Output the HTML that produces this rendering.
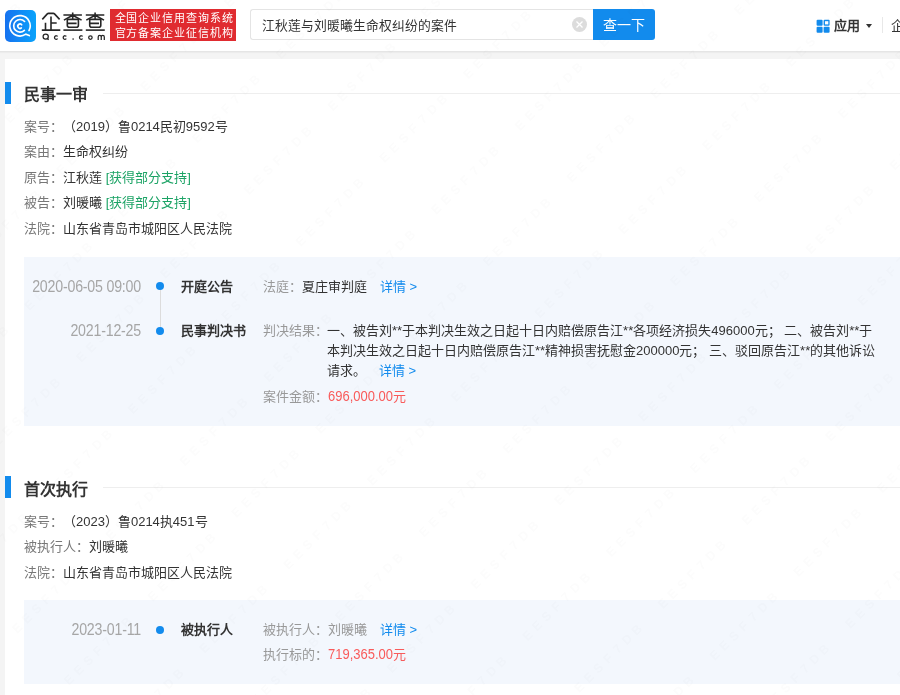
<!DOCTYPE html>
<html lang="zh-CN"><head><meta charset="utf-8">
<style>
*{box-sizing:border-box;margin:0;padding:0}
html,body{width:900px;height:695px;overflow:hidden}
body{text-spacing-trim:space-all;background:#f4f4f4;font-family:"Liberation Sans",sans-serif;font-size:13px;color:#333;position:relative}
.abs{position:absolute}
#hdr{left:0;top:0;width:900px;height:51px;background:#fff;box-shadow:0 1px 0 #e5e5e5,0 2px 1px #ececec}
#logo{left:5px;top:10px;width:31px;height:32px;border-radius:5px;background:linear-gradient(90deg,#1672f0,#0aa3fb)}
#brand{left:41px;top:9px;font-size:22px;letter-spacing:1px;color:#222;line-height:24px}
#qcc{left:42px;top:32px;font-size:9px;letter-spacing:3.2px;color:#222;line-height:10px;font-weight:bold}
#red{left:110px;top:9px;width:126px;height:32px;background:#e02b30;color:#fff;font-size:11px;line-height:15px;padding:1.5px 0 0 4.5px;letter-spacing:0.95px;white-space:nowrap}
#search{left:250px;top:9px;width:344px;height:31px;border:1px solid #e4e4e4;border-right:none;border-radius:3px 0 0 3px;background:#fff}
#stext{left:262px;top:10px;line-height:31px;font-size:12.8px;color:#333}
#clr{left:572px;top:17px;width:15px;height:15px;border-radius:50%;background:#dcdcdc}
#btn{left:593px;top:9px;width:62px;height:31px;background:#128bed;border-radius:0 3px 3px 0;color:#fff;font-size:14px;line-height:33px;text-align:center}
#apps{left:817px;top:20px;width:13px;height:13px}
#appt{left:834px;top:16px;font-size:13px;font-weight:bold;color:#333;line-height:20px}
#tri{left:866px;top:24px;width:0;height:0;border-left:3.5px solid transparent;border-right:3.5px solid transparent;border-top:4px solid #333}
#div{left:882px;top:17px;width:1px;height:16px;background:#e8e8e8}
#qi{left:891px;top:16px;font-size:13px;color:#333;line-height:20px}
#card{left:5px;top:59px;width:895px;height:636px;background:#fff}
.bar{left:5px;width:6px;height:22px;background:#128bed}
.h{left:24px;font-size:16px;font-weight:bold;color:#333;line-height:22px}
.hl{left:103px;height:1px;width:797px;background:#eee}
.row{left:24px;line-height:20px;color:#333;white-space:nowrap}
.lb{color:#999}
.row .lb{color:#777}
.grn{color:#1ba365}
.tl{left:24px;width:876px;background:#f3f7fd}
.dt{width:120px;text-align:right;color:#a6a6a6;font-size:14.2px;letter-spacing:-0.2px;line-height:20px;white-space:nowrap;transform:scaleY(1.14);transform-origin:50% 70%}
.dot{width:8px;height:8px;border-radius:50%;background:#128bed}
.vl{left:159.5px;width:1px;background:#dcdcdc}
.tt{left:181px;font-weight:bold;color:#333;line-height:20px;white-space:nowrap}
.tv{left:263px;line-height:20px;white-space:nowrap}
.lk{color:#128bed;margin-left:13px}
.red{color:#f95b5b}
.num{display:inline-block;transform:scaleY(1.12);transform-origin:50% 75%}
</style></head><body>
<div id="hdr" class="abs"></div>
<div id="logo" class="abs">
<svg width="31" height="32" viewBox="0 0 31 32"><g fill="none" stroke="#fff" stroke-width="1.65" stroke-linecap="round">
<path d="M24.01 20.59 A10.2 10.2 0 1 0 20.85 24.16 L24.3 25.6"/>
<path d="M19.6 11.5 A6.3 6.3 0 1 0 19.38 20.33"/>
<path d="M16.69 14.79 A2.2 2.2 0 1 0 16.38 17.91"/>
</g></svg>
</div>
<svg class="abs" style="left:0;top:0" width="110" height="50" viewBox="0 0 110 50">
<g fill="none" stroke="#262626" stroke-width="1.6" stroke-linejoin="round">
<path d="M42.3 19.4 L47.3 13.9 Q47.8 13.4 48.5 13.4 L53.3 13.4 Q54 13.4 54.5 13.9 L59.6 19.4"/>
<path d="M51 16.6 V29.4 M51 23 H56.7 M45.5 22.8 V29.4 M41.8 30.1 H60.3"/>
<g>
<path d="M63.4 15 H81.9 M72.7 12.5 V19.4 M72.7 15.3 L63.9 20.1 M72.7 15.3 L81.6 20.1"/>
<path d="M67.3 19.4 V25.2 Q67.3 27.2 69.3 27.2 H76.4 Q78.4 27.2 78.4 25.2 V19.4 Z M67.3 23.4 H76.6"/>
<path d="M63.4 30.1 H82.4"/>
</g>
<g transform="translate(22.4 0)">
<path d="M63.4 15 H81.9 M72.7 12.5 V19.4 M72.7 15.3 L63.9 20.1 M72.7 15.3 L81.6 20.1"/>
<path d="M67.3 19.4 V25.2 Q67.3 27.2 69.3 27.2 H76.4 Q78.4 27.2 78.4 25.2 V19.4 Z M67.3 23.4 H76.6"/>
<path d="M63.4 30.1 H82.4"/>
</g>
</g>
<g fill="none" stroke="#262626" stroke-width="1.25">
<circle cx="45.7" cy="36.6" r="2.6"/><path d="M47.2 38.3 L48.6 39.8"/>
<path d="M57.68 36.39 A1.8 1.8 0 1 0 57.68 38.71 M66.38 36.39 A1.8 1.8 0 1 0 66.38 38.71 M82.68 36.39 A1.8 1.8 0 1 0 82.68 38.71"/>
<circle cx="90.4" cy="37.55" r="1.75"/>
<path d="M98.2 39.9 V37 Q98.2 35.3 99.75 35.3 Q101.25 35.3 101.25 37 V39.9 M101.25 37 Q101.25 35.3 102.75 35.3 Q104.3 35.3 104.3 37 V39.9"/>
</g>
<circle cx="73.1" cy="39.1" r="0.8" fill="#262626"/>
</svg>
<div id="red" class="abs">全国企业信用查询系统<br>官方备案企业征信机构</div>
<div id="search" class="abs"></div>
<div id="stext" class="abs">江秋莲与刘暖曦生命权纠纷的案件</div>
<div id="clr" class="abs"><svg width="15" height="15" viewBox="0 0 15 15"><path d="M4.5 4.5L10.5 10.5M10.5 4.5L4.5 10.5" stroke="#fff" stroke-width="1.3"/></svg></div>
<div id="btn" class="abs">查一下</div>
<svg class="abs" style="left:816px;top:19px" width="14" height="14" viewBox="0 0 14 14"><g fill="#128bed"><rect x="0.6" y="0.8" width="6" height="6" rx="1"/><rect x="7.6" y="0.8" width="6" height="6" rx="1"/><rect x="0.6" y="7.8" width="6" height="6" rx="1"/><rect x="7.6" y="7.8" width="6" height="6" rx="1"/></g><rect x="9" y="2.2" width="3.3" height="3.2" fill="#fff"/></svg>
<div id="appt" class="abs">应用</div>
<div id="tri" class="abs"></div>
<div id="div" class="abs"></div>
<div id="qi" class="abs">企</div>

<div id="card" class="abs"></div>

<!-- section 1 -->
<div class="abs bar" style="top:82px"></div>
<div class="abs h" style="top:84px">民事一审</div>
<div class="abs hl" style="top:93px"></div>
<div class="abs row" style="top:117px"><span class="lb">案号：</span>（2019）鲁0214民初9592号</div>
<div class="abs row" style="top:142px"><span class="lb">案由：</span>生命权纠纷</div>
<div class="abs row" style="top:168px"><span class="lb">原告：</span>江秋莲 <span class="grn">[获得部分支持]</span></div>
<div class="abs row" style="top:193px"><span class="lb">被告：</span>刘暖曦 <span class="grn">[获得部分支持]</span></div>
<div class="abs row" style="top:219px"><span class="lb">法院：</span>山东省青岛市城阳区人民法院</div>

<div class="abs tl" style="top:257px;height:169px"></div>
<div class="abs dt" style="left:21px;top:277px">2020-06-05 09:00</div>
<div class="abs vl" style="top:286px;height:45px"></div>
<div class="abs dot" style="left:156px;top:282px"></div>
<div class="abs dot" style="left:156px;top:327px"></div>
<div class="abs tt" style="top:277px">开庭公告</div>
<div class="abs tv" style="top:277px"><span class="lb">法庭：</span>夏庄审判庭<span class="lk">详情 &gt;</span></div>
<div class="abs dt" style="left:21px;top:321px">2021-12-25</div>
<div class="abs tt" style="top:321px">民事判决书</div>
<div class="abs tv" style="top:321px"><span class="lb">判决结果：</span></div>
<div class="abs tv" style="left:327px;top:321px">一、被告刘**于本判决生效之日起十日内赔偿原告江**各项经济损失496000元； 二、被告刘**于<br>本判决生效之日起十日内赔偿原告江**精神损害抚慰金200000元； 三、驳回原告江**的其他诉讼<br>请求。<span class="lk">详情 &gt;</span></div>
<div class="abs tv" style="top:387px"><span class="lb">案件金额：</span><span class="red"><span class="num">696,000.00</span>元</span></div>

<!-- section 2 -->
<div class="abs bar" style="top:476px"></div>
<div class="abs h" style="top:479px">首次执行</div>
<div class="abs hl" style="top:487px"></div>
<div class="abs row" style="top:512px"><span class="lb">案号：</span>（2023）鲁0214执451号</div>
<div class="abs row" style="top:537px"><span class="lb">被执行人：</span>刘暖曦</div>
<div class="abs row" style="top:563px"><span class="lb">法院：</span>山东省青岛市城阳区人民法院</div>

<div class="abs tl" style="top:600px;height:84px"></div>
<div class="abs dt" style="left:21px;top:620px">2023-01-11</div>
<div class="abs dot" style="left:156px;top:626px"></div>
<div class="abs tt" style="top:620px">被执行人</div>
<div class="abs tv" style="top:620px"><span class="lb">被执行人：刘暖曦</span><span class="lk">详情 &gt;</span></div>
<div class="abs tv" style="top:645px"><span class="lb">执行标的：</span><span class="red"><span class="num">719,365.00</span>元</span></div>
<svg class="abs" style="left:0;top:0;pointer-events:none;mix-blend-mode:multiply" width="900" height="695">
<g transform="rotate(-45)" font-family="Liberation Sans" font-weight="bold" font-size="12.5" fill="#fcfcfc" text-anchor="middle">
<text x="-550.4 -536.9 -523.3 -509.8 -496.2 -482.6 -469.1" y="460.5">EESF7DB</text>
<text x="-431.9 -418.3 -404.8 -391.2 -377.7 -364.1 -350.6" y="387.3">EESF7DB</text>
<text x="-431.9 -418.3 -404.8 -391.2 -377.7 -364.1 -350.6" y="460.5">EESF7DB</text>
<text x="-431.9 -418.3 -404.8 -391.2 -377.7 -364.1 -350.6" y="533.7">EESF7DB</text>
<text x="-431.9 -418.3 -404.8 -391.2 -377.7 -364.1 -350.6" y="606.9">EESF7DB</text>
<text x="-313.4 -299.8 -286.3 -272.8 -259.2 -245.6 -232.1" y="240.9">EESF7DB</text>
<text x="-313.4 -299.8 -286.3 -272.8 -259.2 -245.6 -232.1" y="314.1">EESF7DB</text>
<text x="-313.4 -299.8 -286.3 -272.8 -259.2 -245.6 -232.1" y="387.3">EESF7DB</text>
<text x="-313.4 -299.8 -286.3 -272.8 -259.2 -245.6 -232.1" y="460.5">EESF7DB</text>
<text x="-313.4 -299.8 -286.3 -272.8 -259.2 -245.6 -232.1" y="533.7">EESF7DB</text>
<text x="-313.4 -299.8 -286.3 -272.8 -259.2 -245.6 -232.1" y="606.9">EESF7DB</text>
<text x="-313.4 -299.8 -286.3 -272.8 -259.2 -245.6 -232.1" y="680.1">EESF7DB</text>
<text x="-313.4 -299.8 -286.3 -272.8 -259.2 -245.6 -232.1" y="753.3">EESF7DB</text>
<text x="-194.9 -181.3 -167.8 -154.2 -140.7 -127.2 -113.6" y="167.7">EESF7DB</text>
<text x="-194.9 -181.3 -167.8 -154.2 -140.7 -127.2 -113.6" y="240.9">EESF7DB</text>
<text x="-194.9 -181.3 -167.8 -154.2 -140.7 -127.2 -113.6" y="314.1">EESF7DB</text>
<text x="-194.9 -181.3 -167.8 -154.2 -140.7 -127.2 -113.6" y="387.3">EESF7DB</text>
<text x="-194.9 -181.3 -167.8 -154.2 -140.7 -127.2 -113.6" y="460.5">EESF7DB</text>
<text x="-194.9 -181.3 -167.8 -154.2 -140.7 -127.2 -113.6" y="533.7">EESF7DB</text>
<text x="-194.9 -181.3 -167.8 -154.2 -140.7 -127.2 -113.6" y="606.9">EESF7DB</text>
<text x="-194.9 -181.3 -167.8 -154.2 -140.7 -127.2 -113.6" y="680.1">EESF7DB</text>
<text x="-194.9 -181.3 -167.8 -154.2 -140.7 -127.2 -113.6" y="753.3">EESF7DB</text>
<text x="-194.9 -181.3 -167.8 -154.2 -140.7 -127.2 -113.6" y="826.5">EESF7DB</text>
<text x="-76.4 -62.9 -49.3 -35.8 -22.2 -8.7 4.9" y="21.3">EESF7DB</text>
<text x="-76.4 -62.9 -49.3 -35.8 -22.2 -8.7 4.9" y="94.5">EESF7DB</text>
<text x="-76.4 -62.9 -49.3 -35.8 -22.2 -8.7 4.9" y="167.7">EESF7DB</text>
<text x="-76.4 -62.9 -49.3 -35.8 -22.2 -8.7 4.9" y="240.9">EESF7DB</text>
<text x="-76.4 -62.9 -49.3 -35.8 -22.2 -8.7 4.9" y="314.1">EESF7DB</text>
<text x="-76.4 -62.9 -49.3 -35.8 -22.2 -8.7 4.9" y="387.3">EESF7DB</text>
<text x="-76.4 -62.9 -49.3 -35.8 -22.2 -8.7 4.9" y="460.5">EESF7DB</text>
<text x="-76.4 -62.9 -49.3 -35.8 -22.2 -8.7 4.9" y="533.7">EESF7DB</text>
<text x="-76.4 -62.9 -49.3 -35.8 -22.2 -8.7 4.9" y="606.9">EESF7DB</text>
<text x="-76.4 -62.9 -49.3 -35.8 -22.2 -8.7 4.9" y="680.1">EESF7DB</text>
<text x="-76.4 -62.9 -49.3 -35.8 -22.2 -8.7 4.9" y="753.3">EESF7DB</text>
<text x="-76.4 -62.9 -49.3 -35.8 -22.2 -8.7 4.9" y="826.5">EESF7DB</text>
<text x="-76.4 -62.9 -49.3 -35.8 -22.2 -8.7 4.9" y="899.7">EESF7DB</text>
<text x="-76.4 -62.9 -49.3 -35.8 -22.2 -8.7 4.9" y="972.9">EESF7DB</text>
<text x="42.1 55.7 69.2 82.8 96.3 109.8 123.4" y="94.5">EESF7DB</text>
<text x="42.1 55.7 69.2 82.8 96.3 109.8 123.4" y="167.7">EESF7DB</text>
<text x="42.1 55.7 69.2 82.8 96.3 109.8 123.4" y="240.9">EESF7DB</text>
<text x="42.1 55.7 69.2 82.8 96.3 109.8 123.4" y="314.1">EESF7DB</text>
<text x="42.1 55.7 69.2 82.8 96.3 109.8 123.4" y="387.3">EESF7DB</text>
<text x="42.1 55.7 69.2 82.8 96.3 109.8 123.4" y="460.5">EESF7DB</text>
<text x="42.1 55.7 69.2 82.8 96.3 109.8 123.4" y="533.7">EESF7DB</text>
<text x="42.1 55.7 69.2 82.8 96.3 109.8 123.4" y="606.9">EESF7DB</text>
<text x="42.1 55.7 69.2 82.8 96.3 109.8 123.4" y="680.1">EESF7DB</text>
<text x="42.1 55.7 69.2 82.8 96.3 109.8 123.4" y="753.3">EESF7DB</text>
<text x="42.1 55.7 69.2 82.8 96.3 109.8 123.4" y="826.5">EESF7DB</text>
<text x="42.1 55.7 69.2 82.8 96.3 109.8 123.4" y="899.7">EESF7DB</text>
<text x="42.1 55.7 69.2 82.8 96.3 109.8 123.4" y="972.9">EESF7DB</text>
<text x="42.1 55.7 69.2 82.8 96.3 109.8 123.4" y="1046.1">EESF7DB</text>
<text x="42.1 55.7 69.2 82.8 96.3 109.8 123.4" y="1119.3">EESF7DB</text>
<text x="160.6 174.2 187.7 201.2 214.8 228.3 241.9" y="167.7">EESF7DB</text>
<text x="160.6 174.2 187.7 201.2 214.8 228.3 241.9" y="240.9">EESF7DB</text>
<text x="160.6 174.2 187.7 201.2 214.8 228.3 241.9" y="314.1">EESF7DB</text>
<text x="160.6 174.2 187.7 201.2 214.8 228.3 241.9" y="387.3">EESF7DB</text>
<text x="160.6 174.2 187.7 201.2 214.8 228.3 241.9" y="460.5">EESF7DB</text>
<text x="160.6 174.2 187.7 201.2 214.8 228.3 241.9" y="533.7">EESF7DB</text>
<text x="160.6 174.2 187.7 201.2 214.8 228.3 241.9" y="606.9">EESF7DB</text>
<text x="160.6 174.2 187.7 201.2 214.8 228.3 241.9" y="680.1">EESF7DB</text>
<text x="160.6 174.2 187.7 201.2 214.8 228.3 241.9" y="753.3">EESF7DB</text>
<text x="160.6 174.2 187.7 201.2 214.8 228.3 241.9" y="826.5">EESF7DB</text>
<text x="160.6 174.2 187.7 201.2 214.8 228.3 241.9" y="899.7">EESF7DB</text>
<text x="160.6 174.2 187.7 201.2 214.8 228.3 241.9" y="972.9">EESF7DB</text>
<text x="160.6 174.2 187.7 201.2 214.8 228.3 241.9" y="1046.1">EESF7DB</text>
<text x="160.6 174.2 187.7 201.2 214.8 228.3 241.9" y="1119.3">EESF7DB</text>
<text x="279.1 292.7 306.2 319.8 333.3 346.9 360.4" y="314.1">EESF7DB</text>
<text x="279.1 292.7 306.2 319.8 333.3 346.9 360.4" y="387.3">EESF7DB</text>
<text x="279.1 292.7 306.2 319.8 333.3 346.9 360.4" y="460.5">EESF7DB</text>
<text x="279.1 292.7 306.2 319.8 333.3 346.9 360.4" y="533.7">EESF7DB</text>
<text x="279.1 292.7 306.2 319.8 333.3 346.9 360.4" y="606.9">EESF7DB</text>
<text x="279.1 292.7 306.2 319.8 333.3 346.9 360.4" y="680.1">EESF7DB</text>
<text x="279.1 292.7 306.2 319.8 333.3 346.9 360.4" y="753.3">EESF7DB</text>
<text x="279.1 292.7 306.2 319.8 333.3 346.9 360.4" y="826.5">EESF7DB</text>
<text x="279.1 292.7 306.2 319.8 333.3 346.9 360.4" y="899.7">EESF7DB</text>
<text x="279.1 292.7 306.2 319.8 333.3 346.9 360.4" y="972.9">EESF7DB</text>
<text x="397.6 411.2 424.7 438.2 451.8 465.4 478.9" y="460.5">EESF7DB</text>
<text x="397.6 411.2 424.7 438.2 451.8 465.4 478.9" y="533.7">EESF7DB</text>
<text x="397.6 411.2 424.7 438.2 451.8 465.4 478.9" y="606.9">EESF7DB</text>
<text x="397.6 411.2 424.7 438.2 451.8 465.4 478.9" y="680.1">EESF7DB</text>
<text x="397.6 411.2 424.7 438.2 451.8 465.4 478.9" y="753.3">EESF7DB</text>
<text x="397.6 411.2 424.7 438.2 451.8 465.4 478.9" y="826.5">EESF7DB</text>
<text x="516.1 529.6 543.2 556.8 570.3 583.9 597.4" y="533.7">EESF7DB</text>
<text x="516.1 529.6 543.2 556.8 570.3 583.9 597.4" y="606.9">EESF7DB</text>
<text x="516.1 529.6 543.2 556.8 570.3 583.9 597.4" y="680.1">EESF7DB</text>
<text x="516.1 529.6 543.2 556.8 570.3 583.9 597.4" y="753.3">EESF7DB</text>
</g></svg>
</body></html>
